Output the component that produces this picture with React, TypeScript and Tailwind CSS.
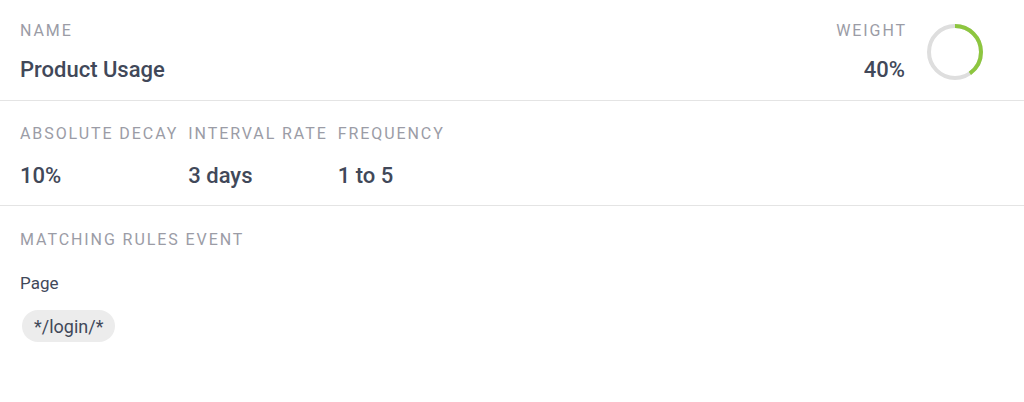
import React from 'react';

const labelCls = 'text-[16px] leading-6 tracking-[0.12em] uppercase text-[#9b9ca6]';
const valueCls = 'text-[22px] leading-7 font-medium text-[#414859]';

function Ring({ percent }: { percent: number }) {
  const r = 26;
  const c = 2 * Math.PI * r;
  return (
    <svg width="58" height="58" viewBox="0 0 58 58" className="-rotate-90">
      <circle cx="29" cy="29" r={r} fill="none" stroke="#dedede" strokeWidth="4" />
      <circle
        cx="29"
        cy="29"
        r={r}
        fill="none"
        stroke="#8dc63f"
        strokeWidth="4"
        strokeDasharray={`${(c * percent) / 100} ${c}`}
      />
    </svg>
  );
}

export default function App() {
  return (
    <div className="w-[1024px] h-[402px] bg-white font-['Roboto',sans-serif]">
      {/* Name + weight */}
      <div className="flex items-start justify-between pl-5 pr-10 pt-[19px] h-[101px] border-b border-[#e4e4e4]">
        <div>
          <div className={labelCls}>Name</div>
          <div className={`${valueCls} mt-[13px]`}>Product Usage</div>
        </div>
        <div className="flex items-start gap-[21px]">
          <div className="flex flex-col items-end">
            <div className={`${labelCls} -mr-[2px]`}>Weight</div>
            <div className={`${valueCls} mt-[13px]`}>40%</div>
          </div>
          <div className="mt-[4px]">
            <Ring percent={40} />
          </div>
        </div>
      </div>

      {/* Decay settings */}
      <div className="flex gap-[10px] pl-5 pt-[21px] h-[105px] border-b border-[#e4e4e4]">
        <div>
          <div className={labelCls}>Absolute Decay</div>
          <div className={`${valueCls} mt-[16px]`}>10%</div>
        </div>
        <div>
          <div className={labelCls}>Interval Rate</div>
          <div className={`${valueCls} mt-[16px]`}>3 days</div>
        </div>
        <div>
          <div className={labelCls}>Frequency</div>
          <div className={`${valueCls} mt-[16px]`}>1 to 5</div>
        </div>
      </div>

      {/* Matching rules */}
      <div className="pl-5 pt-[22px]">
        <div className={labelCls}>Matching Rules Event</div>
        <div className="mt-[19px] text-[17px] leading-6 text-[#414859]">Page</div>
        <div className="mt-[15px] ml-[2px] inline-flex items-center h-[32px] px-[12px] rounded-full bg-[#ececec] text-[18px] text-[#414859]">
          */login/*
        </div>
      </div>
    </div>
  );
}
